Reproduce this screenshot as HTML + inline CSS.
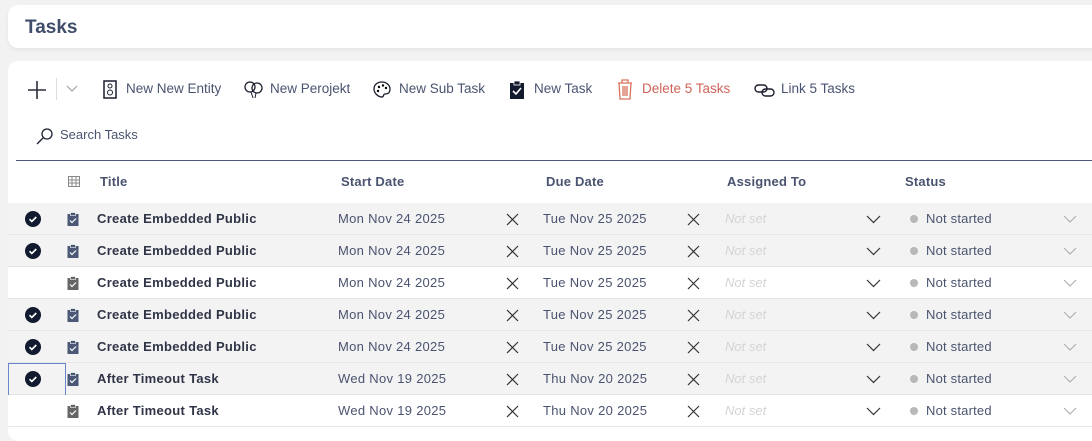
<!DOCTYPE html>
<html><head><style>
*{box-sizing:border-box;margin:0;padding:0}
body{width:1092px;height:433px;background:#f2f2f2;font-family:"Liberation Sans",sans-serif;overflow:hidden;position:relative;color:#3d4660}
.hdr{position:absolute;left:8px;top:5px;width:1100px;height:43px;background:#fff;border-radius:10px;box-shadow:0 2px 4px rgba(0,0,0,.06)}
.hdr span{position:absolute;left:17px;top:12px;font-size:19px;font-weight:bold;color:#3f4d6b}
.main{position:absolute;left:8px;top:61px;width:1100px;height:380px;background:#fff;border-radius:10px}
.abs{position:absolute}
.tb{position:absolute;top:81px;font-size:13.5px;color:#4a5470;white-space:nowrap}
.line{position:absolute;left:16px;top:160px;width:1080px;height:1px;background:#4a5a78}
.th{position:absolute;top:174px;font-size:13px;font-weight:bold;color:#4a5470;letter-spacing:.2px}
.row{position:absolute;left:8px;width:1090px;height:32px;border-bottom:1px solid #e6e6e6}
.row.sel{background:#f3f3f3}
.row div{position:absolute;top:8px;font-size:13px;white-space:nowrap}
.t{left:89px;font-weight:bold;color:#2f3547;letter-spacing:.3px}
.d{color:#4a5470;letter-spacing:.3px}
.ns{left:717px;color:#d4d4d4;font-style:italic}
.st{left:918px;color:#4a5470;letter-spacing:.2px}
.dot{left:902px!important;top:12px!important;width:8px;height:8px;border-radius:50%;background:#b8b8b8}
</style></head><body>
<div class="hdr"><span>Tasks</span></div>
<div class="main"></div>

<svg class="abs" style="left:26px;top:79px" width="22" height="22"><path d="M11 2v18M2 11h18" stroke="#2a2f3a" stroke-width="1.6"/></svg>
<div class="abs" style="left:56px;top:78px;width:1px;height:22px;background:#ddd"></div>
<svg class="abs" style="left:66px;top:85px" width="12" height="8"><path d="M1 1l5 5 5-5" stroke="#999" fill="none"/></svg>
<svg class="abs" style="left:103px;top:80px" width="14" height="19"><rect x="1" y="1" width="12" height="17" fill="none" stroke="#1a1f2e" stroke-width="1.5"/><circle cx="7" cy="6" r="2" fill="none" stroke="#1a1f2e"/><circle cx="7" cy="12.5" r="2.5" fill="none" stroke="#1a1f2e"/></svg>
<div class="tb" style="left:126px">New New Entity</div>
<svg class="abs" style="left:243px;top:80px" width="22" height="20"><circle cx="7" cy="7" r="5" fill="none" stroke="#1a1f2e" stroke-width="1.3"/><circle cx="14" cy="8" r="5" fill="none" stroke="#1a1f2e" stroke-width="1.3"/><path d="M8 12l2 6M13 13l-1 5" stroke="#1a1f2e" fill="none"/></svg>
<div class="tb" style="left:270px">New Perojekt</div>
<svg class="abs" style="left:372px;top:80px" width="20" height="19"><path d="M10 2C5 2 2 5 2 9c0 4 4 8 8 8 2 0 1-3 3-3 3 0 5-1 5-5 0-4-4-7-8-7z" fill="none" stroke="#1a1f2e" stroke-width="1.3"/><circle cx="7" cy="7" r="1.2"/><circle cx="11" cy="5.5" r="1.2"/><circle cx="14" cy="8" r="1.2"/><circle cx="6" cy="11" r="1.2"/></svg>
<div class="tb" style="left:399px">New Sub Task</div>
<svg class="abs" style="left:509px;top:80px" width="16" height="20"><rect x="1" y="3" width="14" height="16" fill="#121a2e"/><rect x="5" y="1" width="6" height="4" fill="#121a2e" stroke="#fff" stroke-width=".8"/><path d="M4 11l3 3 5-6" stroke="#fff" stroke-width="1.6" fill="none"/></svg>
<div class="tb" style="left:534px">New Task</div>
<svg class="abs" style="left:616px;top:79px" width="18" height="21"><path d="M2 4h14M6 4V1h6v3M3 4l1 16h10l1-16M7 7v10M9 7v10M11 7v10" stroke="#d9735e" stroke-width="1.3" fill="none"/></svg>
<div class="tb" style="left:642px;color:#d0645a">Delete 5 Tasks</div>
<svg class="abs" style="left:754px;top:82px" width="22" height="16"><rect x="1" y="3" width="12" height="7" rx="3.5" fill="none" stroke="#1a1f2e" stroke-width="1.4"/><rect x="8" y="7" width="12" height="7" rx="3.5" fill="none" stroke="#1a1f2e" stroke-width="1.4"/></svg>
<div class="tb" style="left:781px">Link 5 Tasks</div>

<svg class="abs" style="left:36px;top:127px" width="18" height="18"><circle cx="11" cy="7" r="5" fill="none" stroke="#1a1f2e" stroke-width="1.3"/><path d="M7 11l-6 6" stroke="#1a1f2e" stroke-width="1.3"/></svg>
<div class="tb" style="left:60px;top:127px;font-size:13px">Search Tasks</div>
<div class="line"></div>

<svg class="abs" style="left:68px;top:176px" width="12" height="11"><path d="M0.5 .5h11v10h-11zM0.5 4h11M0.5 7h11M4 .5v10M8 .5v10" stroke="#888" fill="none"/></svg>
<div class="th" style="left:100px">Title</div>
<div class="th" style="left:341px">Start Date</div>
<div class="th" style="left:546px">Due Date</div>
<div class="th" style="left:727px">Assigned To</div>
<div class="th" style="left:905px">Status</div>

<div id="rows"></div>
<script>
const data=[[1,"Create Embedded Public","Mon Nov 24 2025","Tue Nov 25 2025"],[1,"Create Embedded Public","Mon Nov 24 2025","Tue Nov 25 2025"],[0,"Create Embedded Public","Mon Nov 24 2025","Tue Nov 25 2025"],[1,"Create Embedded Public","Mon Nov 24 2025","Tue Nov 25 2025"],[1,"Create Embedded Public","Mon Nov 24 2025","Tue Nov 25 2025"],[1,"After Timeout Task","Wed Nov 19 2025","Thu Nov 20 2025"],[0,"After Timeout Task","Wed Nov 19 2025","Thu Nov 20 2025"]];
let h="";
data.forEach((r,i)=>{
const top=203+i*32;
const ic=r[0]?"#4a5775":"#666";
h+=`<div class="row ${r[0]?'sel':''}" style="top:${top}px">`+
(r[0]?`<svg style="position:absolute;left:17px;top:8px" width="16" height="16"><circle cx="8" cy="8" r="8" fill="#111a2e"/><path d="M4.5 8.2l2.3 2.3 4.5-4.5" stroke="#fff" stroke-width="1.6" fill="none"/></svg>`:'')+
`<svg style="position:absolute;left:59px;top:9px" width="12" height="14"><rect x="0.5" y="2" width="11" height="12" fill="${ic}"/><rect x="3.5" y="0.5" width="5" height="3" fill="${ic}" stroke="#fff" stroke-width=".6"/><path d="M3 8.5l2 2 4-4" stroke="#fff" stroke-width="1.2" fill="none"/></svg>`+
`<div class="t">${r[1]}</div><div class="d" style="left:330px">${r[2]}</div>`+
`<svg style="position:absolute;left:498px;top:10px" width="13" height="13"><path d="M1 1l11 11M12 1L1 12" stroke="#333" stroke-width="1.2"/></svg>`+
`<div class="d" style="left:535px">${r[3]}</div>`+
`<svg style="position:absolute;left:679px;top:10px" width="13" height="13"><path d="M1 1l11 11M12 1L1 12" stroke="#333" stroke-width="1.2"/></svg>`+
`<div class="ns">Not set</div>`+
`<svg style="position:absolute;left:858px;top:12px" width="15" height="9"><path d="M1 1l6.5 6.5L14 1" stroke="#333" stroke-width="1.2" fill="none"/></svg>`+
`<div class="dot"></div><div class="st">Not started</div>`+
`<svg style="position:absolute;left:1055px;top:12px" width="14" height="8"><path d="M1 1l6 6 6-6" stroke="#aaa" stroke-width="1" fill="none"/></svg>`+
`</div>`;});
document.getElementById("rows").innerHTML=h;
</script>
<div class="abs" style="left:8px;top:363px;width:58px;height:32px;border:1px solid #6a86c8;border-bottom:none"></div>
</body></html>
